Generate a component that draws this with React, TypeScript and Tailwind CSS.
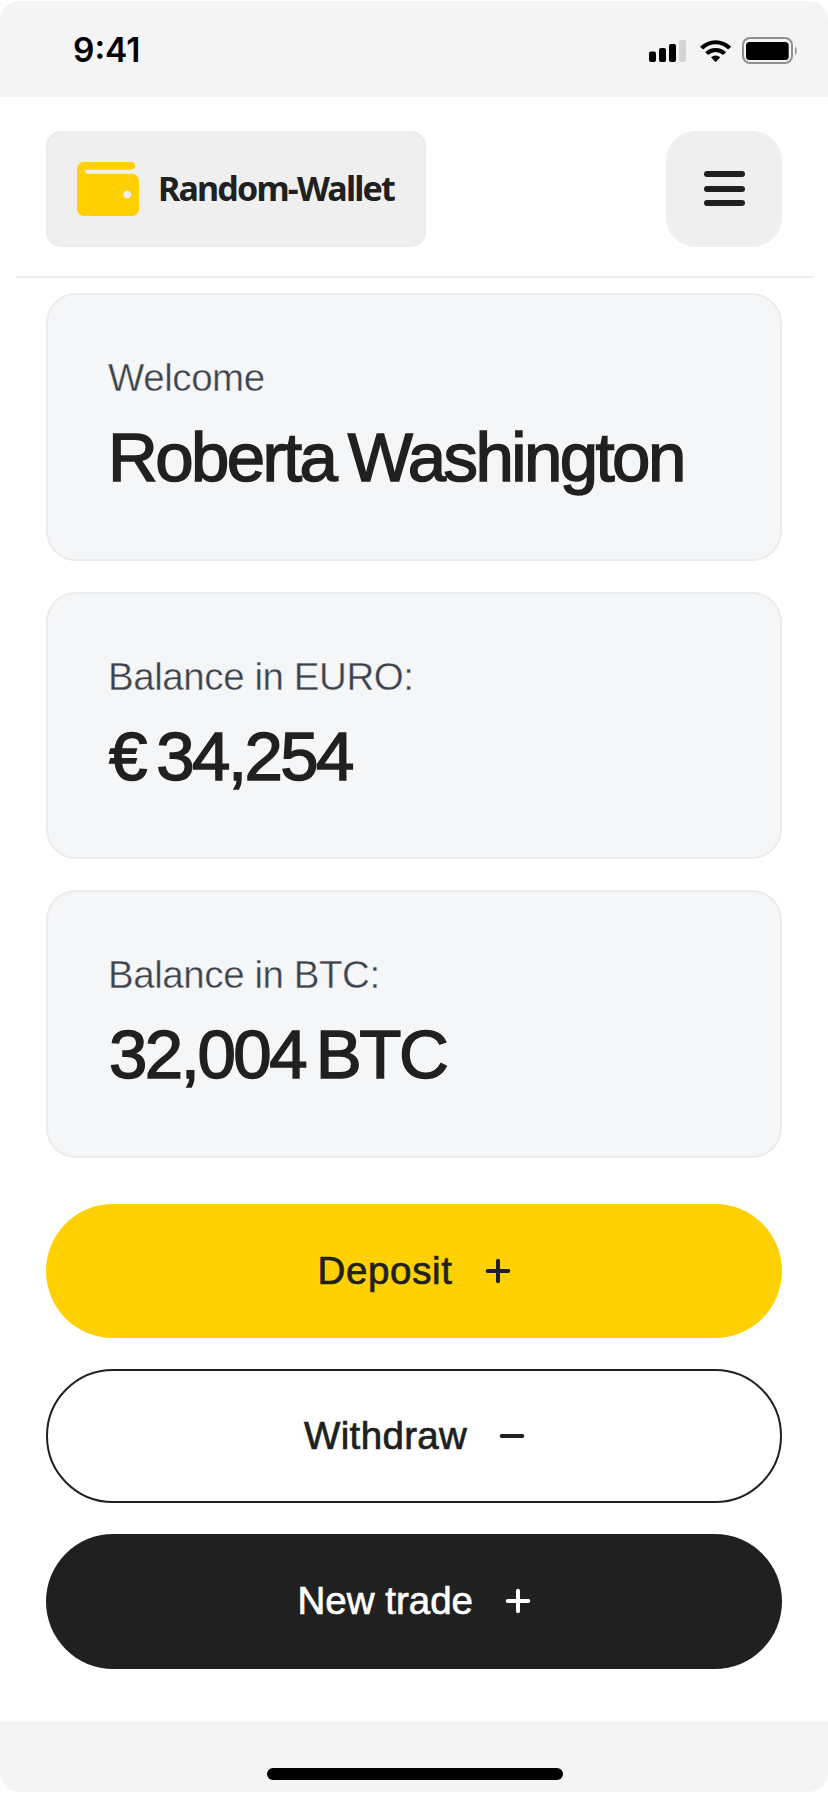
import React from "react";

function StatusIcons() {
  return (
    <svg className="absolute left-[648px] top-[36px]" width="152" height="30" viewBox="648 36 152 30">
      <rect x="649" y="51.5" width="7" height="10.5" rx="2" />
      <rect x="659" y="48" width="7" height="14" rx="2" />
      <rect x="669" y="44" width="7" height="18" rx="2" />
      <rect x="679" y="39.7" width="7" height="22.3" rx="2" fill="#d5d5d5" />
      <path d="M700 46.7l2.6 2.4a1 1 0 0 0 1.2 0 16.8 16.8 0 0 1 23.7 0a1 1 0 0 0 1.2 0l2.6-2.4a22.5 22.5 0 0 0-31.3 0z" />
      <path d="M705.2 52.2l2.5 2.4a1 1 0 0 0 1.2 0 9.9 9.9 0 0 1 13.5 0a1 1 0 0 0 1.2 0l2.5-2.4a15.2 15.2 0 0 0-20.9 0z" />
      <path d="M711 57.2a7 7 0 0 1 9.3 0l-4 4.4a.9.9 0 0 1-1.3 0z" />
      <rect x="743" y="38" width="49" height="25" rx="7" fill="none" stroke="#8f8f91" strokeWidth="2" />
      <rect x="746" y="42" width="42.7" height="18" rx="3.5" />
      <path d="M795 46.5c2.4 1.3 2.4 7.5 0 8.8z" fill="#9a9a9c" />
    </svg>
  );
}

function WalletIcon() {
  return (
    <svg className="shrink-0" width="62" height="54" viewBox="0 0 62 54">
      <path
        fill="#ffd103"
        fillRule="evenodd"
        d="M7 0H54.2a3.85 3.85 0 0 1 0 7.7H10a2 2 0 0 0 0 4H55a7 7 0 0 1 7 7V47a7 7 0 0 1-7 7H7a7 7 0 0 1-7-7V7a7 7 0 0 1 7-7zM50.2 28.6a4 4 0 1 0 .01 0z"
      />
    </svg>
  );
}

function Card({ label, value, valueClass }: { label: string; value: string; valueClass: string }) {
  return (
    <section className="h-[267.5px] w-[736px] shrink-0 rounded-[30px] border-2 border-[#ebecee] bg-[#f5f6f8] pl-[60px] pt-[61px]">
      <p className="h-[44px] whitespace-nowrap text-[38.5px] leading-[44px] tracking-[-0.43px] text-[#3d424b] [-webkit-text-stroke:0.4px_#f5f6f8]">{label}</p>
      <p className={"mt-[18px] h-[80px] whitespace-nowrap text-[69px] leading-[80px] text-[#202020] [-webkit-text-stroke:1.5px_#202020] " + valueClass}>{value}</p>
    </section>
  );
}

function Action({ label, minus, className }: { label: string; minus?: boolean; className: string }) {
  return (
    <button className={"flex h-[134.5px] w-[736px] shrink-0 items-center rounded-[67.25px] text-[38.5px] [-webkit-text-stroke:0.7px_currentColor] " + className}>
      <span className="whitespace-nowrap leading-[44px]">{label}</span>
      <svg className="ml-auto shrink-0" width="26" height="26" viewBox="0 0 26 26" fill="none" stroke="currentColor" strokeWidth="4" strokeLinecap="round">
        <path d={minus ? "M2.7 13H23.3" : "M2.7 13H23.3M13 2.7V23.3"} />
      </svg>
    </button>
  );
}

export default function App() {
  return (
    <div className="flex h-[1793px] w-[828px] flex-col bg-white font-['Liberation_Sans',Arial,sans-serif]">
      <div className="relative mt-px h-[96px] shrink-0 rounded-t-[19px] bg-[#f4f4f4]">
        <div className="pl-[73px] pt-[29px] font-['Inter',sans-serif] text-[33.5px] font-semibold leading-[40px] text-black">9:41</div>
        <div className="absolute -top-px left-0">
          <StatusIcons />
        </div>
      </div>

      <header className="flex h-[180px] shrink-0 items-start justify-between px-[46px] pt-[34px]">
        <div className="flex h-[116px] w-[380px] items-center rounded-[15px] border-2 border-[#ececec] bg-[#efefef] pl-[29px]">
          <WalletIcon />
          <span className="mb-[2px] ml-[19px] whitespace-nowrap font-['Noto_Sans',sans-serif] text-[34px] font-bold leading-[46px] tracking-[-1.8px] text-[#202020]">Random-Wallet</span>
        </div>
        <button className="flex h-[116px] w-[116px] flex-col items-center justify-center gap-[8.5px] rounded-[30px] bg-[#efefef] pb-px" aria-label="Menu">
          <span className="h-[6px] w-[41px] rounded-full bg-[#202020]" />
          <span className="h-[6px] w-[41px] rounded-full bg-[#202020]" />
          <span className="h-[6px] w-[41px] rounded-full bg-[#202020]" />
        </button>
      </header>
      <div className="-mt-[1.5px] mx-[15.5px] h-[2px] shrink-0 bg-[#ededed]" />

      <main className="mt-[15.5px] flex shrink-0 flex-col items-center">
        <div className="flex flex-col gap-[31px]">
          <Card label="Welcome" value="Roberta Washington" valueClass="tracking-[-2.6px] [word-spacing:-4px]" />
          <Card label="Balance in EURO:" value="€ 34,254" valueClass="pl-px tracking-[-2.6px] [word-spacing:-5px]" />
          <Card label="Balance in BTC:" value="32,004 BTC" valueClass="pl-px tracking-[-2.5px] [word-spacing:-6px]" />
        </div>
        <div className="mt-[46px] flex flex-col gap-[30.75px]">
          <Action label="Deposit" className="bg-[#ffd103] pl-[271.5px] pr-[271.5px] tracking-[0.65px] text-[#202020]" />
          <Action label="Withdraw" minus className="border-2 border-[#202020] bg-white pl-[256px] pr-[255.5px] tracking-[0.35px] text-[#202020]" />
          <Action label="New trade" className="bg-[#202020] pl-[251.5px] pr-[251.5px] text-white" />
        </div>
      </main>

      <footer className="mt-auto mb-px flex h-[70px] shrink-0 items-start justify-center rounded-b-[19px] bg-[#f4f4f4] pl-[2px] pt-[46px]">
        <div className="h-[11.5px] w-[296px] rounded-full bg-black" />
      </footer>
    </div>
  );
}
